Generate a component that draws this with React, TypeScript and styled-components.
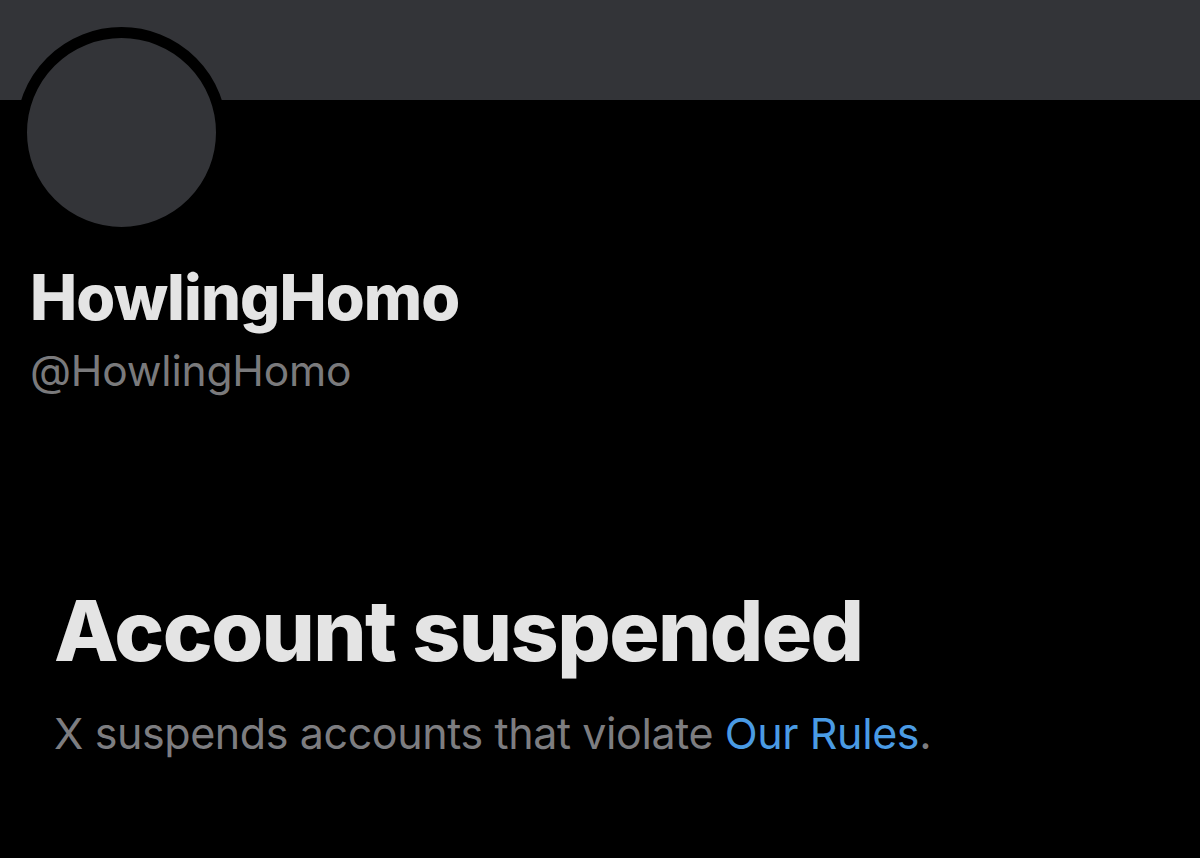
import React from "react";
import styled, { createGlobalStyle } from "styled-components";

const Global = createGlobalStyle`
  html, body {
    margin: 0;
    padding: 0;
    background: #000;
  }
  body {
    font-family: Inter, "Noto Sans", "Liberation Sans", sans-serif;
    -webkit-font-smoothing: antialiased;
  }
`;

const Page = styled.div`
  width: 1200px;
  height: 858px;
  background: #000;
  overflow: hidden;
  display: flex;
  flex-direction: column;
`;

const Banner = styled.div`
  height: 100px;
  background: #333438;
  flex-shrink: 0;
`;

const Profile = styled.div`
  display: flex;
  flex-direction: column;
  align-items: flex-start;
  padding-left: 30px;
`;

const Avatar = styled.div`
  width: 189px;
  height: 189px;
  margin-top: -73px;
  margin-left: -14px;
  border-radius: 50%;
  background: #333438;
  border: 11px solid #000;
`;

const Name = styled.h1`
  margin: 21px 0 0;
  font-size: 63px;
  line-height: 76px;
  font-weight: 800;
  color: #e4e4e4;
  letter-spacing: -0.9px;
`;

const Handle = styled.div`
  margin-top: 10px;
  font-size: 42.5px;
  line-height: 52px;
  font-weight: 400;
  color: #7a7a7c;
  letter-spacing: -0.2px;
`;

const Notice = styled.section`
  display: flex;
  flex-direction: column;
  align-items: flex-start;
  padding-left: 54px;
  margin-top: 184px;
`;

const Title = styled.h2`
  margin: 0;
  font-size: 84px;
  line-height: 100px;
  font-weight: 800;
  color: #e4e4e4;
  letter-spacing: -1.6px;
`;

const Body = styled.p`
  margin: 26px 0 0;
  font-size: 43px;
  line-height: 52px;
  color: #7d7d80;
  letter-spacing: -0.4px;
`;

const RulesLink = styled.a`
  color: #4a9be4;
  text-decoration: none;
`;

export default function App() {
  return (
    <Page>
      <Global />
      <Banner />
      <Profile>
        <Avatar />
        <Name>HowlingHomo</Name>
        <Handle>@HowlingHomo</Handle>
      </Profile>
      <Notice>
        <Title>Account suspended</Title>
        <Body>
          X suspends accounts that violate <RulesLink href="#">Our Rules</RulesLink>.
        </Body>
      </Notice>
    </Page>
  );
}
